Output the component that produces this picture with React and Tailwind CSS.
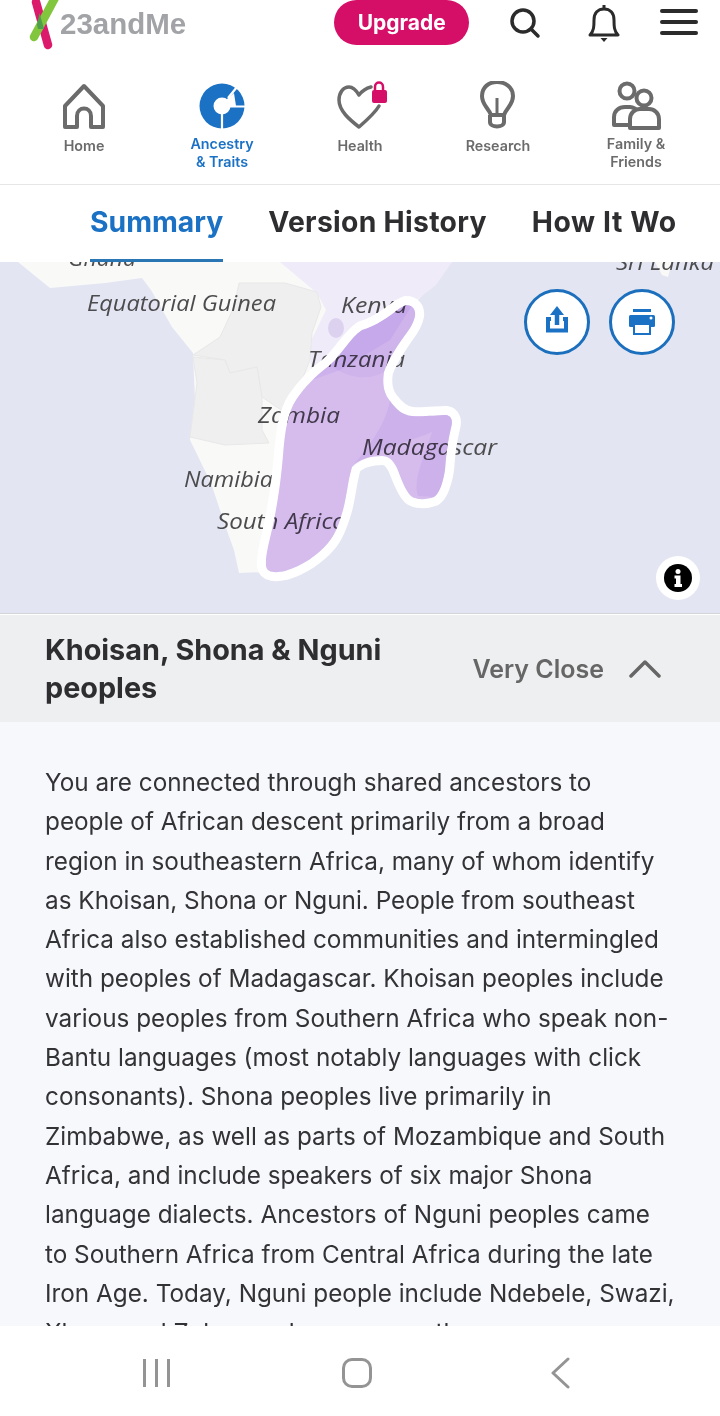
const NAV_GREY = '#6b6b6b'
const BLUE = '#1b72c4'

const LABELS = [
  { text: 'Ghana', x: 68, y: 266, w: 68 },
  { text: 'Sri Lanka', x: 616, y: 270, w: 98 },
  { text: 'Equatorial Guinea', x: 87, y: 311, w: 189 },
  { text: 'Kenya', x: 341, y: 313, w: 66 },
  { text: 'Tanzania', x: 308, y: 367, w: 97 },
  { text: 'Zambia', x: 258, y: 423, w: 82 },
  { text: 'Madagascar', x: 362, y: 455, w: 135 },
  { text: 'Namibia', x: 184, y: 487, w: 89 },
  { text: 'South Africa', x: 217, y: 529, w: 129 },
]

const REGION = 'M406 305 C412 305 416 309 415 316 C413 326 407 332 403 338 C396 348 388 360 384 372 C382 384 384 394 390 401 C396 409 402 415 412 416 C422 417 438 415 446 415 C452 416 453 421 451 428 C448 440 446 455 445 470 C443 482 440 493 434 497 C426 500 416 500 411 496 C405 490 401 478 397 468 C393 460 389 456 382 456 C372 456 358 459 352 467 C348 480 347 495 343 510 C339 524 335 535 328 543 C318 555 302 566 285 571 C276 573 267 573 266 566 C265 555 270 540 274 520 C278 500 281 480 283 455 C285 430 288 412 296 400 C304 388 315 376 330 365 C342 354 350 338 362 330 C376 326 390 316 400 308 Z'

function Logo() {
  return (
    <div className="flex items-start">
      <svg width="60" height="50" viewBox="0 0 60 50" className="shrink-0">
        <path d="M36 2 L48 45" stroke="#dc1a6c" strokeWidth="8.5" strokeLinecap="round" />
        <path d="M56 -4 L34 37" stroke="#82c63e" strokeWidth="8.5" strokeLinecap="round" />
        <path d="M39.5 13 L44 29 L38 29 L37 25 Z" fill="#4f9e4c" />
      </svg>
      <span className="mt-[7px] text-[29.5px] leading-[34px] font-bold text-[#a1a3a6] font-['Liberation_Sans',sans-serif]">23andMe</span>
    </div>
  )
}

function NavIcon({ name }) {
  if (name === 'home') {
    return (
      <svg width="46" height="50" viewBox="0 0 46 50" fill="none" stroke={NAV_GREY} strokeWidth="4" strokeLinejoin="round">
        <path d="M23 5 L42 25 V46 H30 V35 C30 25 16 25 16 35 V46 H4 V25 Z" />
      </svg>
    )
  }
  if (name === 'ancestry') {
    return (
      <svg width="46" height="50" viewBox="0 0 46 50" fill="none">
        <circle cx="23" cy="25" r="22.500" fill={BLUE} />
        <circle cx="23" cy="25" r="8.500" fill="#fff" />
        <path d="M23 30 V50 M26 25.500 H47 M29 17 L38 6" stroke="#fff" strokeWidth="2.200" />
        <path d="M28 18 L35 12 L37 25 L28 25 Z" fill="#fff" />
      </svg>
    )
  }
  if (name === 'health') {
    return (
      <svg width="54" height="50" viewBox="0 0 54 50" fill="none">
        <path d="M26 14 C23 9 20 6 16 6 C10 6 6 12 6 19 C6 30 17 39 26 46 C34 39 42 32 46 25 M26 14 C29 10 34 7 38 6" stroke={NAV_GREY} strokeWidth="3.500" strokeLinecap="round" strokeLinejoin="round" />
        <path d="M42 9 V6 C42 0 50 0 50 6 V9" stroke="#d50f67" strokeWidth="2.500" />
        <rect x="39" y="9" width="15" height="13" rx="2" fill="#d50f67" />
      </svg>
    )
  }
  if (name === 'research') {
    return (
      <svg width="36" height="50" viewBox="0 0 36 50" fill="none" stroke={NAV_GREY} strokeWidth="4" strokeLinejoin="round">
        <path d="M11 34 C8 26 2 24 2 15 C2 6 9 1 17 1 C25 1 33 6 33 15 C33 24 27 26 24 34 Z" />
        <path d="M17 17 V34" strokeWidth="3" />
        <path d="M10 34 V41 C10 47 24 47 24 41 V34" />
      </svg>
    )
  }
  return (
    <svg width="50" height="50" viewBox="0 0 50 50" fill="none" stroke={NAV_GREY} strokeWidth="4" strokeLinejoin="round">
      <circle cx="16" cy="10" r="7.500" />
      <circle cx="33" cy="17" r="7.500" />
      <path d="M20 44 H3 V36 C3 30 8 26 14 26 H19 C21 26 23 27 25 28" />
      <path d="M19 47 V38 C19 32 24 28 29 28 H38 C43 28 48 32 48 38 V47 Z" />
    </svg>
  )
}

const NAV_ITEMS = [
  { icon: 'home', label: ['Home'] },
  { icon: 'ancestry', label: ['Ancestry', '& Traits'], active: true },
  { icon: 'health', label: ['Health'] },
  { icon: 'research', label: ['Research'] },
  { icon: 'family', label: ['Family &', 'Friends'] },
]

function MapPanel() {
  return (
    <div className="relative h-[352px] shrink-0 bg-[#e3e6f2] border-b border-[#d3d4d9]">
      <svg width="720" height="351" viewBox="0 262 720 351" className="block">
        <defs>
          {/* white halo only on the outside of the region */}
          <mask id="outside" maskUnits="userSpaceOnUse" x="0" y="262" width="720" height="351">
            <rect x="0" y="262" width="720" height="351" fill="#fff" />
            <path d={REGION} fill="#000" />
          </mask>
        </defs>
        {/* land */}
        <path d="M18 262 L50 288 L105 283 L142 278 L151 290 L172 327 L193 353 L195 400 L190 440 L211 483 L225 525 L234 550 L239 573 L266 572 L300 500 L330 400 L400 320 L452 262 Z" fill="#f9f9f8" />
        <path d="M655 262 L672 262 L668 277 L662 275 Z" fill="#f9f9f8" />
        <path d={REGION} fill="#fbfaf9" />
        <path d="M280 262 L452 262 L436 285 L414 302 L390 340 L340 370 L312 380 L309 345 L326 310 L317 293 Z" fill="#f0ebf9" />
        <path d="M239 283 L285 283 L317 292 L321 307 L312 333 L310 360 L298 390 L284 412 L262 397 L257 367 L230 373 L225 360 L193 355 L220 337 L234 307 Z" fill="#efefef" stroke="#e8e8e8" />
        <path d="M193 357 L225 360 L230 373 L257 367 L262 397 L262 430 L269 443 L225 445 L190 437 L197 383 Z" fill="#efefef" stroke="#e8e8e8" />
        <ellipse cx="336" cy="328" rx="8" ry="10" fill="#dcd2f0" />
        {LABELS.map(l => (
          <text
            key={l.text}
            x={l.x}
            y={l.y}
            textLength={l.w}
            lengthAdjust="spacingAndGlyphs"
            fontSize="22"
            fontStyle="italic"
            fontFamily="'Open Sans', sans-serif"
            fill="#4c4c4e"
          >
            {l.text}
          </text>
        ))}
        {/* connection region, multiplied so the labels show through */}
        <path d={REGION} fill="none" stroke="#fff" strokeWidth="18" strokeLinejoin="round" mask="url(#outside)" />
        <path d={REGION} fill="#d9c0f3" className="mix-blend-multiply" />
        <path d="M390 401 C396 409 402 415 412 416 C422 417 438 415 446 415 C452 416 453 421 451 428 C448 440 446 455 445 470 C443 482 440 493 434 497 L418 496 C412 480 425 455 432 432 C415 440 385 445 352 467 C370 445 385 425 390 401 Z" fill="#f6f0fc" className="mix-blend-multiply" />
        <path d="M406 305 C412 305 416 309 415 316 C413 326 407 332 403 338 C396 348 388 360 384 372 C370 380 350 380 330 365 C342 354 350 338 362 330 C376 326 390 316 400 308 Z" fill="#f8f3fd" className="mix-blend-multiply" />
      </svg>

      <div className="absolute top-[27px] left-[524px] flex gap-[19px]">
        <div className="w-[66px] h-[66px] rounded-full bg-white border-[3px] border-[#1b6fbd]">
          <svg width="60" height="60" viewBox="0 0 60 60" fill="none" stroke={BLUE} strokeWidth="4">
            <path d="M24 27 H21 V38.500 H39 V27 H36" />
            <path d="M30 33 V19" strokeWidth="4.500" />
            <path d="M30 14 L37 23 H23 Z" fill={BLUE} stroke="none" />
          </svg>
        </div>
        <div className="w-[66px] h-[66px] rounded-full bg-white border-[3px] border-[#1b6fbd]">
          <svg width="60" height="60" viewBox="0 0 60 60" fill="none">
            <rect x="21" y="17" width="18" height="3" fill={BLUE} />
            <rect x="17" y="23" width="26" height="12" rx="1.500" fill={BLUE} />
            <circle cx="39" cy="26" r="1.500" fill="#fff" />
            <rect x="22" y="32" width="16" height="10" fill="#fff" stroke={BLUE} strokeWidth="2" />
          </svg>
        </div>
      </div>

      <div className="absolute top-[294px] left-[656px] w-[44px] h-[44px] rounded-full bg-white flex items-center justify-center">
        <svg width="28" height="28" viewBox="0 0 28 28">
          <circle cx="14" cy="14" r="14" fill="#000" />
          <circle cx="14" cy="7.500" r="2.500" fill="#fff" />
          <path d="M10.500 11.500 H16.500 V20 H18 V23 H10.500 V20 H12 V14.500 H10.500 Z" fill="#fff" />
        </svg>
      </div>
    </div>
  )
}

export default function App() {
  return (
    <div className="w-[720px] h-[1416px] flex flex-col overflow-hidden bg-white font-['Inter',sans-serif]">
      {/* top bar */}
      <div className="h-[64px] shrink-0 flex items-start">
        <Logo />
        <div className="ml-[148px] w-[135px] h-[45px] rounded-full bg-[#d50f67] flex items-center justify-center text-white text-[21px] font-bold">
          Upgrade
        </div>
        <svg className="ml-[40px] mt-[7px]" width="32" height="32" viewBox="0 0 32 32" fill="none" stroke="#2b2b2b" strokeWidth="3.500" strokeLinecap="round">
          <circle cx="14" cy="14" r="11" />
          <path d="M22 22 L29 29" />
        </svg>
        <svg className="ml-[47px] mt-[4px]" width="32" height="38" viewBox="0 0 32 38" fill="none" stroke="#2b2b2b" strokeWidth="3" strokeLinejoin="round">
          <path d="M16 1 V5" />
          <path d="M2 31 C6 27 6 22 6 16 C6 9 10 5 16 5 C22 5 26 9 26 16 C26 22 26 27 30 31 Z" />
          <path d="M12.500 34 H19.500 L16 38 Z" fill="#2b2b2b" stroke="none" />
        </svg>
        <div className="ml-[40px] mt-[9px] w-[38px] flex flex-col gap-[7px]">
          <div className="h-[4px] rounded-full bg-[#2b2b2b]" />
          <div className="h-[4px] rounded-full bg-[#2b2b2b]" />
          <div className="h-[4px] rounded-full bg-[#2b2b2b]" />
        </div>
      </div>

      {/* main nav */}
      <div className="h-[121px] shrink-0 grid grid-cols-5 px-[15px] pt-[17px] border-b border-[#e6e6e6]">
        {NAV_ITEMS.map(item => (
          <div key={item.icon} className="flex flex-col items-center">
            <div className="h-[50px] flex items-center justify-center">
              <NavIcon name={item.icon} />
            </div>
            <div className={`text-[14.300px] leading-[18px] font-semibold text-center ${item.label.length > 1 ? 'mt-[4px]' : 'mt-[6px]'} ${item.active ? 'text-[#1b72c4]' : 'text-[#6b6b6b]'}`}>
              {item.label.map(line => <div key={line}>{line}</div>)}
            </div>
          </div>
        ))}
      </div>

      {/* tabs */}
      <div className="h-[77px] shrink-0 ml-[90px] mr-[44px] flex gap-[45px] overflow-hidden text-[28.300px] font-bold whitespace-nowrap">
        <div className="h-full flex items-center border-b-[3px] border-[#2a75b3] text-[#1b72c4]">Summary</div>
        <div className="h-full flex items-center pb-[3px] tracking-[0.3px] text-[#2e2e30]">Version History</div>
        <div className="h-full flex items-center pb-[3px] tracking-[0.6px] text-[#2e2e30]">How It Works</div>
      </div>

      <MapPanel />

      {/* accordion */}
      <div className="h-[107px] shrink-0 mt-[1px] bg-[#eeeff1] pl-[45px] pr-[59px] flex items-center justify-between">
        <div className="w-[360px] text-[28.800px] leading-[38px] font-bold text-[#2e2e30]">Khoisan, Shona &amp; Nguni peoples</div>
        <div className="flex items-center gap-[25px]">
          <span className="pt-[2px] text-[25px] font-semibold text-[#666666]">Very Close</span>
          <svg width="32" height="18" viewBox="0 0 32 18" fill="none" stroke="#666666" strokeWidth="3.500" strokeLinecap="round" strokeLinejoin="round">
            <path d="M2 16 L16 2 L30 16" />
          </svg>
        </div>
      </div>

      <div className="flex-1 min-h-0 overflow-hidden bg-[#f7f8fb] pt-[41px] pl-[45px] pr-[44px] text-[24.300px] leading-[39.300px] text-[#333336]">
        You are connected through shared ancestors to people of African descent primarily from a broad region in southeastern Africa, many of whom identify as Khoisan, Shona or Nguni. People from southeast Africa also established communities and intermingled with peoples of Madagascar. Khoisan peoples include various peoples from Southern Africa who speak non-Bantu languages (most notably languages with click consonants). Shona peoples live primarily in Zimbabwe, as well as parts of Mozambique and South Africa, and include speakers of six major Shona language dialects. Ancestors of Nguni peoples came to Southern Africa from Central Africa during the late Iron Age. Today, Nguni people include Ndebele, Swazi, Xhosa and Zulu peoples, among others.
      </div>

      {/* android nav */}
      <div className="h-[90px] shrink-0 bg-white flex items-center pt-[4px]">
        <div className="ml-[143px] flex gap-[9px]">
          <div className="w-[3px] h-[28px] bg-[#949494]" />
          <div className="w-[3px] h-[28px] bg-[#949494]" />
          <div className="w-[3px] h-[28px] bg-[#949494]" />
        </div>
        <div className="ml-[172px] w-[30px] h-[30px] rounded-[10px] border-[3px] border-[#949494]" />
        <svg className="ml-[178px]" width="20" height="32" viewBox="0 0 20 32" fill="none" stroke="#949494" strokeWidth="3" strokeLinecap="round" strokeLinejoin="round">
          <path d="M18 2 L3 16 L18 30" />
        </svg>
      </div>
    </div>
  )
}
